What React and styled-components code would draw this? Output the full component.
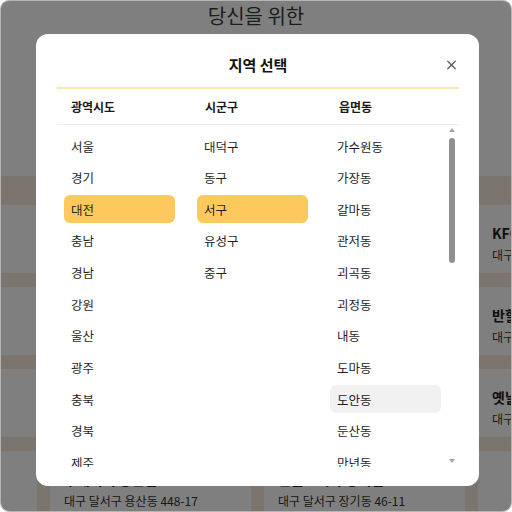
import React from "react";
import styled, { createGlobalStyle } from "styled-components";
import { X } from "lucide-react";

const GlobalStyle = createGlobalStyle`
    html, body {
        margin: 0;
        padding: 0;
        background: #fff;
    }
    body {
        font-family: "Noto Sans CJK KR", "Noto Sans", sans-serif;
    }
`

const provinces = ["서울", "경기", "대전", "충남", "경남", "강원", "울산", "광주", "충북", "경북", "제주"]
const districts = ["대덕구", "동구", "서구", "유성구", "중구"]
const towns = ["가수원동", "가장동", "갈마동", "관저동", "괴곡동", "괴정동", "내동", "도마동", "도안동", "둔산동", "만년동"]

// cards under the modal carry no text, only the ones peeking out do
const cards = [
    ["", ""], ["", ""], ["", ""], ["KFC 대구성서점", "대구 달서구 이곡동 1208"],
    ["", ""], ["", ""], ["", ""], ["반할치킨 본점", "대구 달서구 용산동 77"],
    ["", ""], ["", ""], ["", ""], ["옛날통닭 성서점", "대구 달서구 신당동 31"],
    ["", ""], ["수제버거 용산점", "대구 달서구 용산동 448-17"], ["한솥도시락 장기점", "대구 달서구 장기동 46-11"], ["", ""],
]

function App() {
    return (
        <>
            <GlobalStyle />
            <Frame>
                <PageTitle>당신을 위한</PageTitle>
                <Spacer />
                <CardSection>
                    {cards.map(([name, addr], i) => (
                        <Card key={i}>
                            {name && <CardName>{name}</CardName>}
                            {addr && <CardAddr>{addr}</CardAddr>}
                        </Card>
                    ))}
                </CardSection>

                <Overlay>
                    <Modal>
                        <TitleRow>
                            <span />
                            <Title>지역 선택</Title>
                            <CloseButton aria-label="닫기">
                                <X size={18} strokeWidth={2} />
                            </CloseButton>
                        </TitleRow>
                        <HeaderRow>
                            <HeaderCell>광역시도</HeaderCell>
                            <HeaderCell>시군구</HeaderCell>
                            <HeaderCell>읍면동</HeaderCell>
                        </HeaderRow>
                        <ListArea>
                            <Columns>
                                <Column>
                                    {provinces.map((p) => (
                                        <Item key={p} selected={p === "대전"}>{p}</Item>
                                    ))}
                                </Column>
                                <Column>
                                    {districts.map((d) => (
                                        <Item key={d} selected={d === "서구"}>{d}</Item>
                                    ))}
                                </Column>
                                <Column>
                                    {towns.map((t) => (
                                        <Item key={t} hovered={t === "도안동"}>{t}</Item>
                                    ))}
                                </Column>
                            </Columns>
                            <Scrollbar>
                                <ArrowUp />
                                <Thumb />
                                <TrackRest />
                                <ArrowDown />
                            </Scrollbar>
                        </ListArea>
                    </Modal>
                </Overlay>
            </Frame>
        </>
    )
}

const Frame = styled.div`
    position: relative;
    width: 512px;
    height: 512px;
    box-sizing: border-box;
    border: 1px solid #b4b4b4;
    border-radius: 9px;
    overflow: hidden;
    background: #fff;
    display: flex;
    flex-direction: column;
`

const PageTitle = styled.h1`
    margin: 0;
    height: 32px;
    font-size: 20px;
    font-weight: 400;
    line-height: 30px;
    text-align: center;
    color: #3a3a3a;
`

const Spacer = styled.div`
    height: 145px;
    flex-shrink: 0;
`

const CardSection = styled.div`
    flex: 1;
    background: #f9ebdb;
    padding-top: 29px;
    display: grid;
    grid-template-columns: 36px 201px 201px 201px;
    grid-auto-rows: 68px;
    gap: 14px 13px;
`

const Card = styled.div`
    background: #fff;
    padding: 18px 14px 0;
    white-space: nowrap;
    overflow: hidden;
`

const CardName = styled.div`
    font-size: 14px;
    font-weight: 700;
    color: #222;
    line-height: 20px;
`

const CardAddr = styled.div`
    margin-top: 3px;
    font-size: 12px;
    color: #333;
    line-height: 18px;
`

const Overlay = styled.div`
    position: absolute;
    inset: 0;
    background: rgba(0, 0, 0, 0.5);
    padding: 33px 0 0 35px;
`

const Modal = styled.div`
    width: 443px;
    height: 452px;
    box-sizing: border-box;
    background: #fff;
    border-radius: 12px;
    padding: 0 20px 19px 21px;
    display: flex;
    flex-direction: column;
`

const TitleRow = styled.div`
    height: 55px;
    flex-shrink: 0;
    box-sizing: border-box;
    padding-top: 8px;
    border-bottom: 2px solid #fae7ae;
    display: grid;
    grid-template-columns: 1fr auto 1fr;
    align-items: center;
`

const Title = styled.h2`
    margin: 0;
    font-size: 15px;
    font-weight: 700;
    color: #111;
`

const CloseButton = styled.button`
    justify-self: end;
    width: 15px;
    height: 15px;
    padding: 0;
    border: none;
    background: none;
    color: #5a5a5a;
    display: flex;
    align-items: center;
    justify-content: center;
`

const HeaderRow = styled.div`
    height: 35px;
    flex-shrink: 0;
    border-bottom: 1px solid #ececec;
    display: grid;
    grid-template-columns: repeat(3, 1fr);
    align-items: center;
`

const HeaderCell = styled.div`
    padding-left: 14px;
    font-size: 12px;
    font-weight: 700;
    color: #1a1a1a;
`

const ListArea = styled.div`
    flex: 1;
    min-height: 0;
    overflow: hidden;
    display: flex;
`

const Columns = styled.div`
    flex: 1;
    display: grid;
    grid-template-columns: 133px 133px 1fr;
    padding-top: 7px;
`

const Column = styled.div`
    display: flex;
    flex-direction: column;
    gap: 3.67px;
`

const Item = styled.div`
    flex-shrink: 0;
    margin-left: 7px;
    width: 111px;
    height: 28px;
    box-sizing: border-box;
    padding-left: 7px;
    border-radius: 6px;
    display: flex;
    align-items: center;
    font-size: 12.5px;
    color: #1f1f1f;
    background: ${(p) => (p.selected ? "#fdc95c" : p.hovered ? "#f1f1f1" : "transparent")};
`

const Scrollbar = styled.div`
    width: 15px;
    flex-shrink: 0;
    display: flex;
    flex-direction: column;
    align-items: center;
    padding: 3px 0 4px;
    box-sizing: border-box;
`

const ArrowUp = styled.div`
    width: 0;
    height: 0;
    border-left: 3.5px solid transparent;
    border-right: 3.5px solid transparent;
    border-bottom: 4px solid #a4a4a4;
`

const ArrowDown = styled.div`
    width: 0;
    height: 0;
    border-left: 3.5px solid transparent;
    border-right: 3.5px solid transparent;
    border-top: 4px solid #a4a4a4;
`

const Thumb = styled.div`
    margin-top: 6px;
    width: 6px;
    height: 125px;
    border-radius: 3px;
    background: #909090;
`

const TrackRest = styled.div`
    flex: 1;
`

export default App
